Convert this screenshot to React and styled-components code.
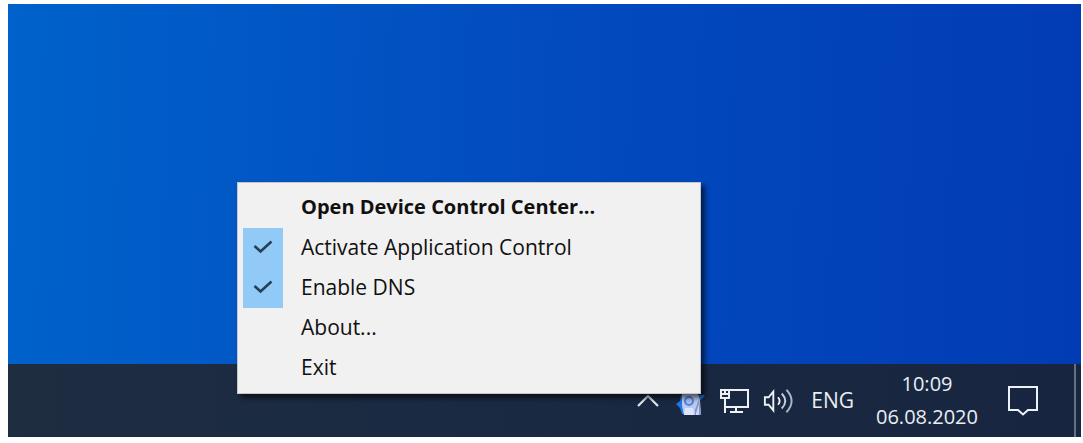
import React, { useState } from 'react'
import styled, { createGlobalStyle } from 'styled-components'


const GlobalStyle = createGlobalStyle`
  *{
    box-sizing:border-box;
  }

  body{
    margin:0;
    background:#ffffff;
    font-family:"Open Sans","Noto Sans",sans-serif;
  }

  button{
    border:0;
    padding:0;
    background:none;
    color:inherit;
    font:inherit;
  }
`;

const Page = styled.main`
  display:flex;
  min-height:100vh;
  padding:4px 2px 6px 8px;
`;

const Desktop = styled.div`
  position:relative;
  flex:1;
  display:flex;
  flex-direction:column;
  overflow:hidden;
`;

const Wallpaper = styled.div`
  flex:1;
  background:linear-gradient(92deg,#0062ca 0%,#005cc8 14%,#0252c2 34%,#0249bd 56%,#0242b8 78%,#023cb4 100%);
`;

const Taskbar = styled.footer`
  display:flex;
  justify-content:flex-end;
  height:73px;
  background:linear-gradient(90deg,#1e2d40,#1a2a42 40%,#182540);
  color:#e9eef5;
`;

const Tray = styled.div`
  display:flex;
  align-items:center;
  gap:14px;
  margin-right:14px;
`;

const TrayButton = styled.button`
  display:flex;
  align-items:center;
  justify-content:center;
  width:${({ $narrow }) => ($narrow ? '28px' : '30px')};
  height:100%;
`;

const Language = styled.button`
  height:100%;
  padding:0 4px;
  font-size:21px;
  line-height:33px;
`;

const Clock = styled.button`
  width:110px;
  height:100%;
  padding-bottom:2px;
  font-size:20px;
  line-height:33px;
  text-align:center;

  time{
    display:block;
  }
`;

const Notifications = styled.button`
  display:flex;
  align-items:center;
  justify-content:center;
  width:92px;
  height:100%;
  padding-right:10px;
`;

const ShowDesktop = styled.button`
  width:7px;
  height:100%;
  border-left:2px solid #647084;
`;

const Menu = styled.div`
  position:absolute;
  right:380px;
  bottom:43px;
  width:464px;
  padding:5px;
  border:1px solid #c4c6ca;
  background:#f1f1f1;
  box-shadow:4px 4px 5px rgba(0,0,0,0.6);
  color:#101010;
  font-size:21px;
  line-height:38px;
`;

const MenuButton = styled.button`
  display:block;
  width:100%;
  height:40px;
  padding:0 0 2px 58px;
  text-align:left;
  font-size:${({ $primary }) => ($primary ? '20px' : '21px')};
  font-weight:${({ $primary }) => ($primary ? 700 : 400)};
`;

const MenuToggle = styled.label`
  display:grid;
  grid-template-columns:40px 1fr;
  column-gap:18px;
  height:40px;

  input,
  svg{
    grid-area:1 / 1;
  }

  input{
    appearance:none;
    width:40px;
    height:40px;
    margin:0;

    &:checked{
      background:#91c9f7;
    }
  }

  svg{
    align-self:center;
    justify-self:center;
    pointer-events:none;
  }

  input:not(:checked) + svg{
    visibility:hidden;
  }
`;

const CheckIcon = () => (
  <svg width="20" height="16" viewBox="0 0 20 16" fill="none" stroke="#263f55" strokeWidth="2.6" aria-hidden="true">
    <path d="M1.5 6 L7.5 11.5 L18.5 1.5" />
  </svg>
)

const ChevronIcon = () => (
  <svg width="24" height="16" viewBox="0 0 24 16" fill="none" stroke="#dfe6ee" strokeWidth="2.2" aria-hidden="true">
    <path d="M3 13 L13 3 L23 13" />
  </svg>
)

const AgentIcon = () => (
  <svg width="30" height="30" viewBox="0 0 30 30" aria-hidden="true">
    <path d="M6 9 L5 15 L1 18 L5 22 L7 28 L12 28 L12 9 Z" fill="#1f78e6" />
    <path d="M18 5 L23 9 L30 9 L27 13 L22 15 Z" fill="#1d73e2" />
    <path d="M7 5 L22 5 L25 14 L26 29 L9 29 L7 20 Z" fill="#b9caf1" />
    <path d="M20 29 L20 24 L24 13 L26 29 Z" fill="#8193cb" />
    <path d="M21 27 L24 18 L24 29 L21 29 Z" fill="#c9d6f5" />
    <path d="M10 22 L18 22 L19 29 L9 29 Z" fill="#dde5fa" />
    <circle cx="14" cy="15" r="4" fill="#a9c1f3" stroke="#5a7fd8" strokeWidth="2" />
  </svg>
)

const NetworkIcon = () => (
  <svg width="30" height="28" viewBox="0 0 30 28" fill="none" stroke="#edf2f7" strokeWidth="2" aria-hidden="true">
    <path d="M10 3 H29 V20 H7" />
    <path d="M2 3 H10 V11 H2 Z M2 7 H10 M6 3 V7 M6 11 V26" />
    <path d="M17 20 V25 M11 25 H24" />
  </svg>
)

const SpeakerIcon = () => (
  <svg width="32" height="28" viewBox="0 0 32 28" fill="none" stroke="#edf2f7" strokeWidth="2" aria-hidden="true">
    <path d="M2 10 H6 L11 4 V24 L6 18 H2 Z" />
    <path d="M16 10 Q19.5 14 16 18" />
    <path d="M20 6 Q27.5 14 20 22" stroke="#c8d1dd" />
    <path d="M25 2 Q36 14 25 26" stroke="#aab5c5" />
  </svg>
)

const NotificationIcon = () => (
  <svg width="32" height="32" viewBox="0 0 32 32" fill="none" stroke="#edf2f7" strokeWidth="2" aria-hidden="true">
    <path d="M2 2 H30 V25 H21 L16 29.5 L11 25 H2 Z" />
  </svg>
)

const App = () => {
  const [appControl, setAppControl] = useState(true)
  const [dns, setDns] = useState(true)

  return (
    <Page>
      <GlobalStyle />
      <Desktop>
        <Wallpaper />
        <Taskbar>
          <Tray>
            <TrayButton $narrow aria-label="Show hidden icons"><ChevronIcon /></TrayButton>
            <TrayButton aria-label="Device Control Center"><AgentIcon /></TrayButton>
            <TrayButton aria-label="Network"><NetworkIcon /></TrayButton>
            <TrayButton aria-label="Volume"><SpeakerIcon /></TrayButton>
            <Language>ENG</Language>
          </Tray>
          <Clock>
            <time>10:09</time>
            <time dateTime="2020-08-06">06.08.2020</time>
          </Clock>
          <Notifications aria-label="Notifications"><NotificationIcon /></Notifications>
          <ShowDesktop aria-label="Show desktop" />
        </Taskbar>
        <Menu>
          <MenuButton $primary>Open Device Control Center...</MenuButton>
          <MenuToggle>
            <input type="checkbox" checked={appControl} onChange={() => setAppControl(!appControl)} />
            <CheckIcon />
            <span>Activate Application Control</span>
          </MenuToggle>
          <MenuToggle>
            <input type="checkbox" checked={dns} onChange={() => setDns(!dns)} />
            <CheckIcon />
            <span>Enable DNS</span>
          </MenuToggle>
          <MenuButton>About...</MenuButton>
          <MenuButton>Exit</MenuButton>
        </Menu>
      </Desktop>
    </Page>
  )
}


export default App;
